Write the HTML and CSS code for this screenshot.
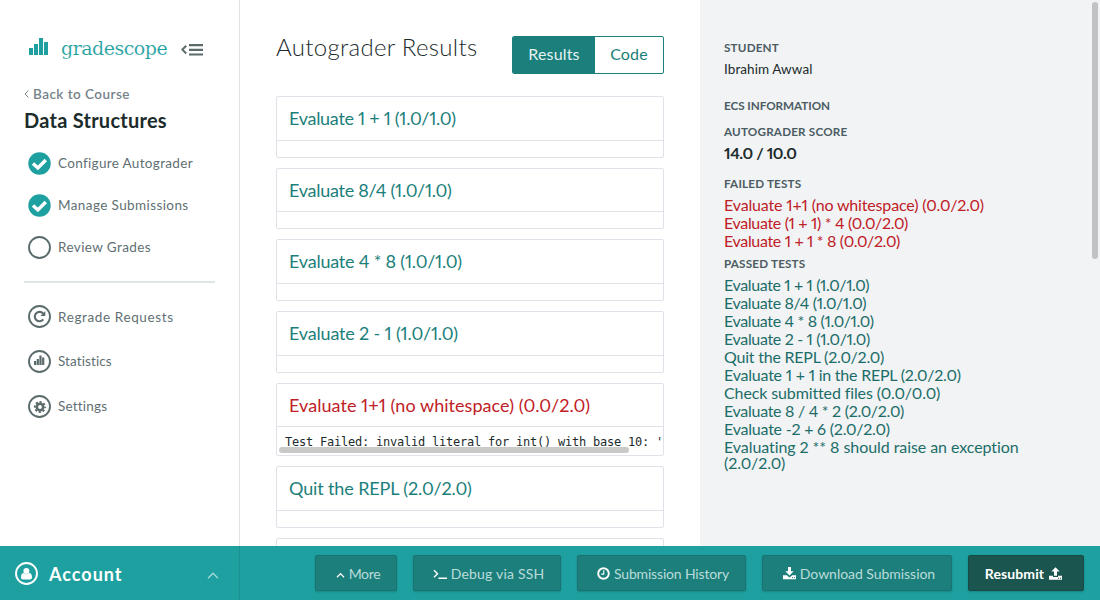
FILE: index.html
```html
<!DOCTYPE html>
<html lang="en">
<head>
<meta charset="utf-8">
<title>Autograder Results</title>
<link rel="stylesheet" href="styles.css">
</head>
<body>
<svg width="0" height="0" class="defs">
  <symbol id="bars" viewBox="0 0 19 17"><path d="M0 10h4v7H0zM5 6h4v11H5zM10 0h4v17h-4zM15 4h4v13h-4z"/></symbol>
</svg>
<div class="app">
  <aside class="sidebar">
    <div class="brand">
      <svg class="brand-mark"><use href="#bars"/></svg>
      <span class="brand-name">gradescope</span>
      <svg class="collapse" viewBox="0 0 22 12"><path d="M5.2 1.7 1.4 5.6l3.8 3.9" fill="none" stroke="#5b6b6b" stroke-width="2"/><path d="M8 0h14v2.2H8zM8 4.7h14v2.2H8zM8 9.4h14v2.2H8z" fill="#5b6b6b"/></svg>
    </div>
    <a class="back"><svg viewBox="0 0 5 8"><path d="M4.4.6 1 4l3.4 3.4" fill="none" stroke="#74838a"/></svg>Back to Course</a>
    <h2 class="course">Data Structures</h2>
    <nav class="steps">
      <a class="n1"><svg viewBox="0 0 23 23"><circle cx="11.5" cy="11.5" r="11.2" fill="#1ea0a0"/><path d="m5 11.400 4.900 4.600 7.900-8" fill="none" stroke="#fff" stroke-width="3.400"/></svg>Configure Autograder</a>
      <a class="n2"><svg viewBox="0 0 23 23"><circle cx="11.5" cy="11.5" r="11.2" fill="#1ea0a0"/><path d="m5 11.400 4.900 4.600 7.900-8" fill="none" stroke="#fff" stroke-width="3.400"/></svg>Manage Submissions</a>
      <a class="n3"><svg viewBox="0 0 23 23"><circle class="ring" cx="11.5" cy="11.5" r="10.5"/></svg>Review Grades</a>
    </nav>
    <nav class="tools">
      <a class="n4"><svg viewBox="0 0 23 23"><circle class="ring" cx="11.5" cy="11.5" r="10.5"/><path d="M15.300 14.300a4.700 4.700 0 1 1-.2-5.800" fill="none" stroke="#5b6b6b" stroke-width="2.100"/><path d="M17.300 6v4.900h-4.900z" fill="#5b6b6b"/></svg>Regrade Requests</a>
      <a class="n5"><svg viewBox="0 0 23 23"><circle class="ring" cx="11.5" cy="11.5" r="10.5"/><path d="M6 11h2.200v4H6zM8.700 9h2.200v6H8.700zM11.400 5.500h2.200V15h-2.200zM14.100 7.500h2.200V15h-2.200z" fill="#5b6b6b"/></svg>Statistics</a>
      <a class="n6"><svg viewBox="0 0 23 23"><circle class="ring" cx="11.5" cy="11.5" r="10.5"/><circle cx="12" cy="12" r="3.200" fill="none" stroke="#5b6b6b" stroke-width="2.600"/><circle cx="12" cy="12" r="5.100" fill="none" stroke="#5b6b6b" stroke-width="1.900" stroke-dasharray="2.200 1.806" stroke-dashoffset="1.100"/></svg>Settings</a>
    </nav>
  </aside>

  <main class="main">
    <header class="head">
      <h1>Autograder Results</h1>
      <div class="tabs"><a class="tab on">Results</a><a class="tab code">Code</a></div>
    </header>
    <section class="cards">
      <article class="card"><h3 class="c1">Evaluate 1 + 1 (1.0/1.0)</h3><div class="out"></div></article>
      <article class="card"><h3 class="c2">Evaluate 8/4 (1.0/1.0)</h3><div class="out"></div></article>
      <article class="card"><h3 class="c3">Evaluate 4 * 8 (1.0/1.0)</h3><div class="out"></div></article>
      <article class="card"><h3 class="c4">Evaluate 2 - 1 (1.0/1.0)</h3><div class="out"></div></article>
      <article class="card failed"><h3 class="c5">Evaluate 1+1 (no whitespace) (0.0/2.0)</h3><div class="out"><pre>Test Failed: invalid literal for int() with base 10: '</pre><div class="hbar"></div></div></article>
      <article class="card"><h3 class="c6">Quit the REPL (2.0/2.0)</h3><div class="out"></div></article>
      <article class="card"><h3></h3><div class="out"></div></article>
    </section>
  </main>

  <aside class="info">
    <div class="details">
      <h4>Student</h4>
      <p class="name">Ibrahim Awwal</p>
      <h4 class="ecs">ECS Information</h4>
      <h4>Autograder Score</h4>
      <p class="score">14.0 / 10.0</p>
      <h4>Failed Tests</h4>
      <ul class="tests bad">
        <li class="t1">Evaluate 1+1 (no whitespace) (0.0/2.0)</li>
        <li class="t2">Evaluate (1 + 1) * 4 (0.0/2.0)</li>
        <li class="t3">Evaluate 1 + 1 * 8 (0.0/2.0)</li>
      </ul>
      <h4>Passed Tests</h4>
      <ul class="tests">
        <li class="p1">Evaluate 1 + 1 (1.0/1.0)</li>
        <li class="p2">Evaluate 8/4 (1.0/1.0)</li>
        <li class="p3">Evaluate 4 * 8 (1.0/1.0)</li>
        <li class="p4">Evaluate 2 - 1 (1.0/1.0)</li>
        <li class="p5">Quit the REPL (2.0/2.0)</li>
        <li class="p6">Evaluate 1 + 1 in the REPL (2.0/2.0)</li>
        <li class="p7">Check submitted files (0.0/0.0)</li>
        <li class="p8">Evaluate 8 / 4 * 2 (2.0/2.0)</li>
        <li class="p9">Evaluate -2 + 6 (2.0/2.0)</li>
        <li class="p10">Evaluating 2 ** 8 should raise an exception (2.0/2.0)</li>
      </ul>
    </div>
    <div class="vbar"></div>
  </aside>
</div>

<footer class="footer">
  <div class="account">
    <svg class="user" viewBox="0 0 23 23"><circle cx="11.5" cy="11.5" r="10.5" fill="none" stroke="#fff" stroke-width="1.9"/><circle cx="11.4" cy="9" r="3" fill="#fff"/><path d="M6 15.2c0-2.6 1-4.2 2.8-4.2 1.6 1.6 3.6 1.6 5.2 0 1.8 0 3 1.600 3 4.200 0 1.400-.7 2.200-2 2.200H8c-1.300 0-2-.8-2-2.200z" fill="#fff"/></svg>
    <span>Account</span>
    <svg class="up" viewBox="0 0 12 7"><path d="m1 6.200 5-5 5 5" fill="none" stroke="#a5d9d9" stroke-width="1.300"/></svg>
  </div>
  <div class="actions">
    <a class="btn b1"><svg width="9" height="6" viewBox="0 0 9 6"><path d="m1 5.200 3.500-3.600L8 5.200" fill="none" stroke="#fff" stroke-width="1.300"/></svg><span>More</span></a>
    <a class="btn b2"><svg width="14" height="10" viewBox="0 0 14 10"><path d="m1 1.200 3.500 3.500L1 8.200M5.500 9.200H14" fill="none" stroke="#fff" stroke-width="1.400"/></svg><span>Debug via SSH</span></a>
    <a class="btn b3"><svg width="13" height="13" viewBox="0 0 13 13"><circle cx="6.500" cy="6.500" r="5.300" fill="none" stroke="#fff" stroke-width="1.900"/><path d="M6.800 3.300v3.800H4.300" fill="none" stroke="#fff" stroke-width="1.100"/></svg><span>Submission History</span></a>
    <a class="btn b4"><svg width="13" height="13" viewBox="0 0 13 13"><path d="M5 0h3v4.300h2.700L6.500 8.600 2.300 4.300H5zM0 8.200h3.700l2.800 2.300 2.800-2.300H13V12.200H0z" fill="#fff"/><path d="M9 10.600h1M11 10.600h1" stroke="#1d7f7b"/></svg><span>Download Submission</span></a>
    <a class="btn b5"><span>Resubmit</span><svg width="13" height="13" viewBox="0 0 13 13"><path d="M6.500.2l4.200 4.300H8v4.300H5V4.500H2.300zM0 8.700h4v1.200h5V8.700h4v4H0z" fill="#fff"/><path d="M9 11.200h1M11 11.200h1" stroke="#1b554f"/></svg></a>
  </div>
</footer>
</body>
</html>
```
FILE: styles.css
```css
* { box-sizing: border-box; }
body { margin: 0; width: 1100px; height: 600px; overflow: hidden; display: flex; flex-direction: column; background: #fff; color: #1c2b2b; font-family: Lato, "Open Sans", sans-serif; font-feature-settings: "pnum"; }
h1, h2, h3, h4, p, ul, pre { margin: 0; padding: 0; font-weight: 400; }
ul { list-style: none; }
a, h1, h2, h3, h4, p, li, span { white-space: nowrap; }
svg { flex: none; display: block; }
.defs { display: none; }
.app { display: flex; height: 546px; overflow: hidden; }

.sidebar { width: 240px; flex: none; border-right: 1px solid #dfe3e6; padding: 36px 24px 0; }
.brand { display: flex; height: 24px; padding-left: 5px; }
.brand-mark { width: 19px; height: 17px; margin-top: 2px; fill: #1ea0a0; }
.brand-name { width: 107px; margin-left: 13px; font: 300 19px/24px "Roboto Slab", "DejaVu Serif", serif; letter-spacing: -.5px; color: #1ea0a0; -webkit-text-stroke: .15px #fff; }
.collapse { width: 22px; height: 12px; margin: 8px 0 0 13px; }
.back { display: flex; align-items: center; gap: 4px; margin-top: 26px; line-height: 16px; font-size: 13.500px; font-weight: 600; color: #74838a; letter-spacing: .46px; }
.back svg { width: 5px; height: 8px; }
.course { margin-top: 6px; line-height: 24px; font-size: 20px; font-weight: 700; letter-spacing: .25px; }
.steps, .tools { display: grid; }
.steps { margin-top: 10px; padding-bottom: 13px; grid-auto-rows: 42px; border-bottom: 2px solid #dfe6e6; width: 191px; }
.tools { margin-top: 11.600px; grid-auto-rows: 44.600px; }
.steps a, .tools a { display: flex; align-items: center; gap: 7px; padding-left: 4px; font-size: 13.500px; color: #5f6f73; letter-spacing: .4px; }
.steps a.n1 { letter-spacing: .33px; }
.tools a.n4 { letter-spacing: .62px; }
.tools a.n5 { letter-spacing: .1px; }
.tools a.n6 { letter-spacing: .2px; }
.steps svg, .tools svg { width: 23px; height: 23px; }
.ring { fill: none; stroke: #5b6b6b; stroke-width: 1.900; }

.main { width: 460px; flex: none; padding: 36px 36px 0; }
.head { display: flex; justify-content: space-between; height: 60px; }
.head h1 { font-size: 24px; line-height: 22px; font-weight: 300; letter-spacing: .31px; }
.tabs { display: flex; width: 152px; height: 38px; border: 1px solid #1b807b; border-radius: 2px; overflow: hidden; }
.tab { display: flex; align-items: center; justify-content: center; width: 68px; padding-bottom: 3px; font-size: 16px; letter-spacing: .15px; color: #1b807b; }
.tab.on { width: 82px; background: #1b807b; color: #e4f2f2; }
.cards { display: grid; grid-template-columns: minmax(0, 1fr); gap: 10px; }
.card { height: 61.700px; border: 1px solid #e0e2ea; border-radius: 2px; }
.card.failed { height: 73.600px; }
.card h3 { height: 43.600px; padding-left: 12px; border-bottom: 1px solid #e0e2ea; font-size: 18px; line-height: 43px; color: #1b807b; }
.card.failed h3 { color: #bf2026; }
.card .c1 { letter-spacing: -.29px; }
.card .c2 { letter-spacing: -.27px; }
.card .c3 { letter-spacing: -.21px; }
.card .c4 { letter-spacing: -.17px; }
.card .c5 { letter-spacing: .05px; }
.card .c6 { letter-spacing: -.13px; }
.out { padding: 6px 0 0 2px; overflow: hidden; }
.out pre { height: 14px; padding-left: 6px; font: 12px/18px "DejaVu Sans Mono", monospace; font-feature-settings: normal; letter-spacing: -.224px; }
.hbar { position: relative; width: 350px; height: 6px; border-radius: 3px; background: #c9c9c9; }

.info { flex: 1; display: flex; justify-content: space-between; padding: 2px 2px 0 24px; background: #f1f3f5; }
.details { width: 310px; padding-top: 38px; }
.details h4 { padding-bottom: 2px; font-size: 11.700px; line-height: 14px; font-weight: 700; text-transform: uppercase; letter-spacing: .18px; color: #4c5c63; }
.name { margin: 5px 0 21px; font-size: 13.500px; line-height: 16px; letter-spacing: .08px; }
.details .ecs { margin-bottom: 10px; letter-spacing: -.05px; }
.score { margin: 5px 0 15px; font-size: 16px; line-height: 16px; font-weight: 700; letter-spacing: -.45px; }
.tests { display: grid; gap: 2px; margin: 5px 0 7px; font-size: 16px; line-height: 16px; color: #1c6d68; }
.tests.bad { color: #bf2026; }
.t1 { letter-spacing: -.16px; }
.t2 { letter-spacing: -.34px; }
.t3 { letter-spacing: -.34px; }
.p1 { letter-spacing: -.38px; }
.p2, .p3 { letter-spacing: -.35px; }
.p4 { letter-spacing: -.33px; }
.p5 { letter-spacing: -.22px; }
.p6 { letter-spacing: -.22px; }
.p7 { letter-spacing: -.12px; }
.p8 { letter-spacing: -.29px; }
.p9 { letter-spacing: -.22px; }
.tests .p10 { letter-spacing: -.07px; white-space: normal; }
.vbar { width: 6px; height: 257px; border-radius: 3px; background: #c1c2c4; }

.footer { display: flex; height: 54px; background: #1ea0a0; color: #fff; }
.account { display: flex; align-items: center; width: 240px; padding: 1px 20px 0 15px; border-right: 1px solid #1b9290; }
.user { width: 23px; height: 23px; }
.account span { flex: 1; margin-left: 11px; font-size: 18px; font-weight: 700; letter-spacing: 1px; }
.up { width: 12px; height: 7px; margin-top: 4px; }
.actions { flex: 1; display: flex; justify-content: flex-end; gap: 16px; padding: 9px 16px 0 0; }
.btn { display: flex; align-items: center; justify-content: center; gap: 4px; height: 36px; padding-top: 1px; border: 1px solid #1a7370; border-radius: 2px; background: #1d7f7b; box-shadow: 0 1px 2px rgba(0,0,0,.18); font-size: 14px; color: #b9dcda; }
.btn svg { margin-bottom: 1px; }
.btn.b1 svg { margin: 2px 0 0; }
.btn.b2 svg { margin: 1px 0 0; }
.b1 { width: 82px; padding-left: 4px; letter-spacing: -.3px; }
.b2 { width: 148px; padding-left: 3px; letter-spacing: .2px; }
.b3 { width: 169px; padding-left: 3px; letter-spacing: -.17px; }
.b4 { width: 190px; padding-left: 4px; letter-spacing: -.04px; }
.b5 { width: 116px; padding-right: 5px; letter-spacing: .1px; background: #1b554f; border-color: #194b46; color: #fff; font-weight: 700; }
.b5 svg { margin-left: 1px; }
```
